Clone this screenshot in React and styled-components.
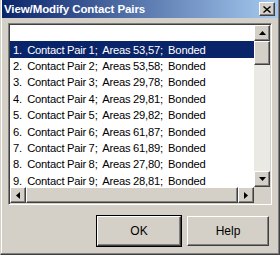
import React from 'react';
import styled, { createGlobalStyle, css } from 'styled-components';

const Global = createGlobalStyle`
  html, body { margin: 0; padding: 0; background: #d4d0c8; }
  body { font-family: "Liberation Sans", Arial, sans-serif; }
  * { box-sizing: border-box; }
`;

const raised = css`
  border-style: solid;
  border-width: 1px;
  border-color: #ffffff #404040 #404040 #ffffff;
  box-shadow: inset -1px -1px #808080, inset 1px 1px #d4d0c8;
  background: #d4d0c8;
`;

const Window = styled.div`
  width: 280px;
  height: 255px;
  background: #d4d0c8;
  border-style: solid;
  border-width: 0 1px 1px 1px;
  border-color: #d4d0c8 #404040 #404040 #d4d0c8;
  box-shadow: inset -1px -1px #808080, inset 1px 0 #ffffff;
  padding: 0 1px 1px 1px;
  display: flex;
  flex-direction: column;
`;

const TitleBar = styled.div`
  height: 18px;
  flex: none;
  background: linear-gradient(to right, #0a246a, #a6caf0);
  display: flex;
  align-items: center;
  justify-content: space-between;
  padding: 0 3px 0 2px;
`;

const Title = styled.span`
  color: #ffffff;
  font-weight: bold;
  font-size: 11.5px;
  letter-spacing: -0.1px;
  white-space: nowrap;
`;

const CloseButton = styled.div`
  ${raised};
  width: 16px;
  height: 14px;
  display: flex;
  align-items: center;
  justify-content: center;
`;

const Body = styled.div`
  flex: 1;
  display: flex;
  flex-direction: column;
  padding: 5px 6px 0 6px;
`;

const ListBox = styled.div`
  height: 182px;
  border-style: solid;
  border-width: 1px;
  border-color: #808080 #ffffff #ffffff #808080;
  box-shadow: inset 1px 1px #404040, inset -1px -1px #d4d0c8;
  padding: 1px;
  display: grid;
  grid-template-columns: 1fr 16px;
  grid-template-rows: 1fr 16px;
  background: #d4d0c8;
`;

const ListArea = styled.div`
  background: #ffffff;
  overflow: hidden;
  display: flex;
  flex-direction: column;
`;

const Row = styled.div`
  height: 16.4px;
  flex: none;
  display: flex;
  align-items: center;
  padding-left: 3px;
  font-size: 11.2px;
  letter-spacing: -0.2px;
  word-spacing: -0.3px;
  white-space: pre;
  color: ${p => (p.$selected ? '#ffffff' : '#000000')};
  background: ${p => (p.$selected ? '#0a246a' : 'transparent')};
`;

const VScroll = styled.div`
  display: flex;
  flex-direction: column;
  background: #ebe9e4;
`;

const HScroll = styled.div`
  display: flex;
  background: #ebe9e4;
`;

const ArrowButton = styled.div`
  ${raised};
  width: 16px;
  height: 16px;
  flex: none;
  display: flex;
  align-items: center;
  justify-content: center;
`;

const Thumb = styled.div`
  ${raised};
  flex: ${p => (p.$grow ? 1 : 'none')};
  height: ${p => (p.$size ? `${p.$size}px` : 'auto')};
`;

const Track = styled.div`
  flex: 1;
`;

const Corner = styled.div`
  background: #d4d0c8;
`;

const ButtonRow = styled.div`
  display: flex;
  justify-content: flex-end;
  gap: 6px;
  margin-top: 11px;
  padding-right: 3px;
`;

const Button = styled.div`
  ${raised};
  width: ${p => p.$w}px;
  height: 30px;
  display: flex;
  align-items: center;
  justify-content: center;
  font-size: 12px;
  color: #000;
  ${p => p.$default && css`
    outline: 1px solid #000000;
  `}
`;

const Arrow = ({ dir }) => {
  const pts = {
    up: '0,4 3.5,0 7,4',
    down: '0,0 7,0 3.5,4',
    left: '4,0 4,7 0,3.5',
    right: '0,0 0,7 4,3.5',
  }[dir];
  const vertical = dir === 'up' || dir === 'down';
  return (
    <svg width={vertical ? 7 : 4} height={vertical ? 4 : 7} viewBox={vertical ? '0 0 7 4' : '0 0 4 7'}>
      <polygon points={pts} fill="#000" />
    </svg>
  );
};

const rows = [
  '1.  Contact Pair 1;  Areas 53,57;  Bonded',
  '2.  Contact Pair 2;  Areas 53,58;  Bonded',
  '3.  Contact Pair 3;  Areas 29,78;  Bonded',
  '4.  Contact Pair 4;  Areas 29,81;  Bonded',
  '5.  Contact Pair 5;  Areas 29,82;  Bonded',
  '6.  Contact Pair 6;  Areas 61,87;  Bonded',
  '7.  Contact Pair 7;  Areas 61,89;  Bonded',
  '8.  Contact Pair 8;  Areas 27,80;  Bonded',
  '9.  Contact Pair 9;  Areas 28,81;  Bonded',
];

export default function App() {
  return (
    <>
      <Global />
      <Window>
        <TitleBar>
          <Title>View/Modify Contact Pairs</Title>
          <CloseButton>
            <svg width="8" height="7" viewBox="0 0 8 7">
              <path d="M0.5 0.5 L7.5 6.5 M7.5 0.5 L0.5 6.5" stroke="#000" strokeWidth="1.4" />
            </svg>
          </CloseButton>
        </TitleBar>
        <Body>
          <ListBox>
            <ListArea>
              <Row> </Row>
              {rows.map((r, i) => (
                <Row key={i} $selected={i === 0}>{r}</Row>
              ))}
            </ListArea>
            <VScroll>
              <ArrowButton><Arrow dir="up" /></ArrowButton>
              <Thumb $size={24} />
              <Track />
              <ArrowButton><Arrow dir="down" /></ArrowButton>
            </VScroll>
            <HScroll>
              <ArrowButton><Arrow dir="left" /></ArrowButton>
              <Thumb $grow />
              <ArrowButton><Arrow dir="right" /></ArrowButton>
            </HScroll>
            <Corner />
          </ListBox>
          <ButtonRow>
            <Button $w={84} $default>OK</Button>
            <Button $w={82}>Help</Button>
          </ButtonRow>
        </Body>
      </Window>
    </>
  );
}
